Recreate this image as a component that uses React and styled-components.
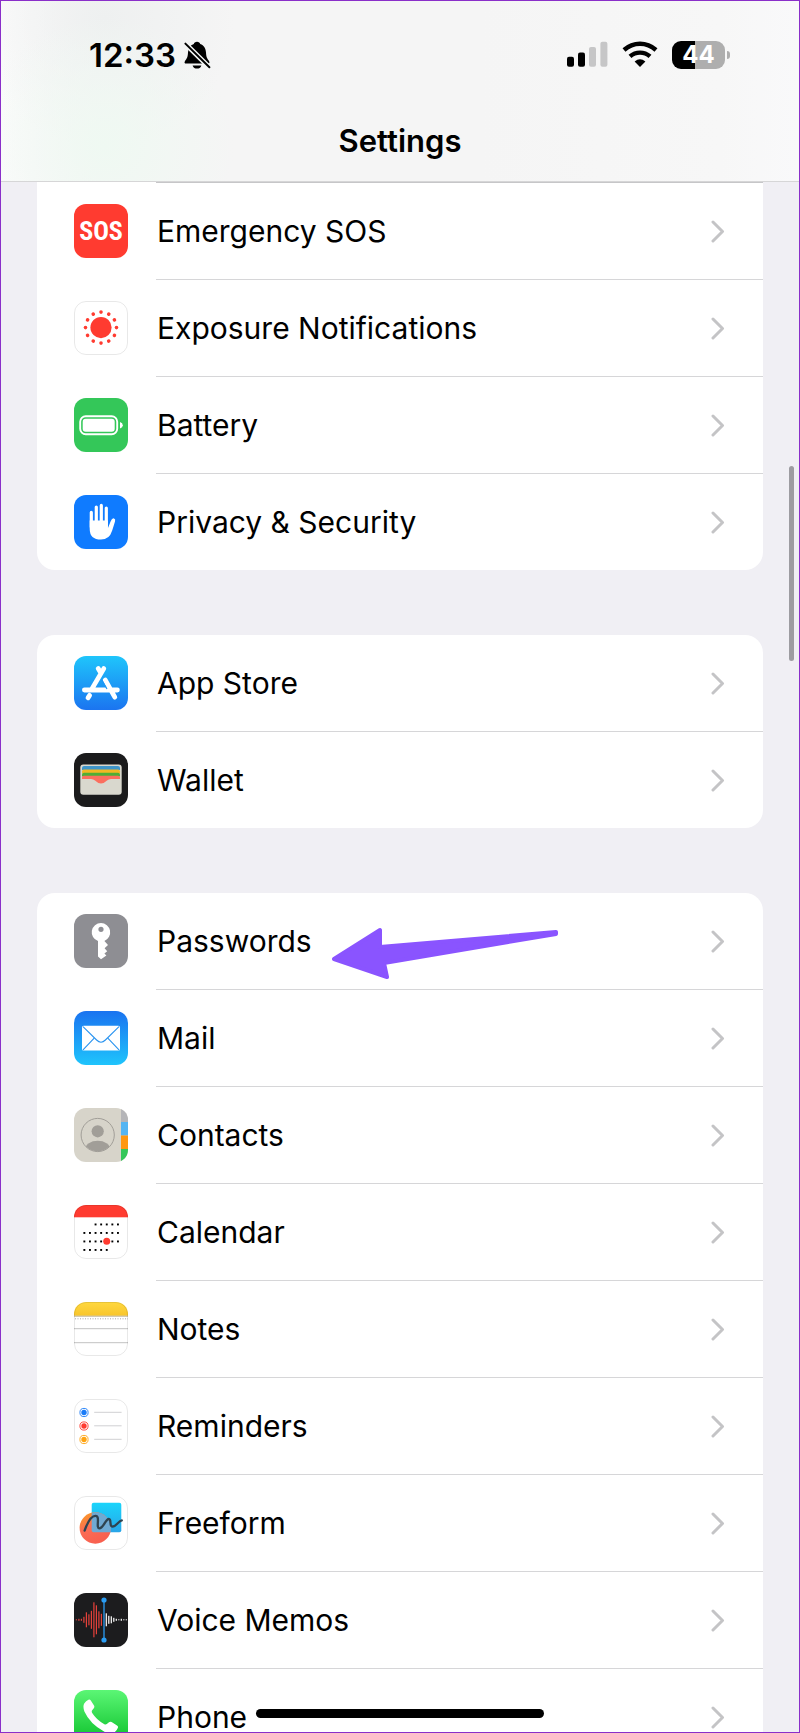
import React from 'react';
import styled, { createGlobalStyle } from 'styled-components';

const range = (n) => Array.from({ length: n }, (_, i) => i);

const SosIcon = () => <SosTile>SOS</SosTile>;

const ExposureIcon = () => (
  <Tile bg='#fff' outlined viewBox='0 0 54 54'>
    <circle cx='27' cy='26.6' r='10.6' fill='#ff3b30' />
    {range(12).map((i) => (
      <circle key={i} cx='27' cy='11.1' r='1.8' fill='#ff3b30' transform={`rotate(${i * 30} 27 26.6)`} />
    ))}
  </Tile>
);

const BatteryIcon = () => (
  <Tile bg='#34c759' viewBox='0 0 54 54'>
    <rect x='6.2' y='18.2' width='37' height='18' rx='5.5' fill='none' stroke='#fff' strokeWidth='1.9' />
    <rect x='8.7' y='20.7' width='32' height='13' rx='3' fill='#fff' />
    <path d='M46 24 Q48.8 25 48.8 27.3 Q48.8 29.6 46 30.6 Z' fill='#fff' />
  </Tile>
);

const HandIcon = () => (
  <Tile bg='#0f7bff' viewBox='0 0 54 54'>
    <path
      d='M17.3 17.4V32M22.3 12V30M27.3 10.4V30M32.3 13V32'
      stroke='#fff'
      strokeWidth='3.2'
      strokeLinecap='round'
      fill='none'
    />
    <path
      d='M15.7 25.5H33.9V33.2Q35.2 30 36.8 26Q38 23 40 23.4Q41.8 24 41 26.4Q39.6 31 38.2 35.4Q35.4 44.6 27 44.6Q15.7 44.6 15.7 34Z'
      fill='#fff'
    />
  </Tile>
);

const AppStoreIcon = () => (
  <Tile bg='linear-gradient(#1fc5fb, #1b74f0)' viewBox='0 0 54 54'>
    <g stroke='#fff' strokeWidth='4.8' strokeLinecap='round'>
      <path d='M29.8 12.6L17.6 33.4M24.2 12.6L27 17.2M31.2 24L40.8 41.2M10.4 34H43.4M15.6 39.4L14 41.8' />
    </g>
    <path d='M27.6 23.6L33 33' stroke='#1e98f7' strokeWidth='1.2' />
  </Tile>
);

const WalletIcon = () => (
  <Tile bg='#1b1b1c' viewBox='0 0 54 54'>
    <rect x='6.3' y='11.5' width='41.4' height='30.2' rx='3' fill='#d9d8ce' />
    <path d='M8 17V15Q8 13 10 13H44Q46 13 46 15V17Z' fill='#3f95c8' />
    <path d='M8 20.5V18.5Q8 16.5 10 16.5H44Q46 16.5 46 18.5V20.5Z' fill='#f2b824' />
    <path d='M8 23.5V21.8Q8 19.8 10 19.8H44Q46 19.8 46 21.8V23.5Z' fill='#4fae35' />
    <path
      d='M8 26V24.6Q8 22.8 10 22.8H44Q46 22.8 46 24.6V26H37Q34.6 26 33 27.6Q30 30.6 27 30.6Q24 30.6 21 27.6Q19.4 26 17 26Z'
      fill='#fb6f5f'
    />
  </Tile>
);

const KeyIcon = () => (
  <Tile bg='#8e8e93' viewBox='0 0 54 54'>
    <path
      fillRule='evenodd'
      fill='#fff'
      d='M27 9A9.3 9.3 0 0 1 30.4 26.9L34 31L30.6 34.2L33.2 37.2L30.4 39.6L32.4 41.4L27 45.2L24 42.6V27.1A9.3 9.3 0 0 1 27 9ZM27 12.7A2.6 2.6 0 1 0 27 17.9A2.6 2.6 0 1 0 27 12.7Z'
    />
  </Tile>
);

const MailIcon = () => (
  <Tile bg='linear-gradient(#1a73f0, #1fc4fc)' viewBox='0 0 54 54'>
    <rect x='8' y='14.8' width='38' height='24.8' rx='1.6' fill='#fff' />
    <g fill='none' stroke='#2a94f0' strokeWidth='1.1'>
      <path d='M9 15.6L22.6 29Q27 33.4 31.4 29L45 15.6' />
      <path d='M9 38.8L20.2 27.2M45 38.8L33.8 27.2' />
    </g>
  </Tile>
);

const ContactsIcon = () => (
  <Tile bg='#d7d4ca' viewBox='0 0 54 54'>
    <rect x='47' width='7' height='14' fill='#b5b5b8' />
    <rect x='47' y='14' width='7' height='13.5' fill='#55b5f2' />
    <rect x='47' y='27.5' width='7' height='13.5' fill='#ff9710' />
    <rect x='47' y='41' width='7' height='13' fill='#34c759' />
    <clipPath id='contact-badge'>
      <circle cx='23.7' cy='27' r='16.4' />
    </clipPath>
    <circle cx='23.7' cy='27' r='16.6' fill='none' stroke='#a19e98' strokeWidth='1' />
    <circle cx='23.7' cy='23.3' r='6.1' fill='#a19e98' />
    <ellipse cx='23.7' cy='41' rx='12.5' ry='8.2' fill='#a19e98' clipPath='url(#contact-badge)' />
  </Tile>
);

// first and last dot of every week in the calendar icon
const WEEKS = [
  [2, 6],
  [0, 6],
  [0, 6],
  [0, 4],
];

const CalendarIcon = () => (
  <Tile bg='#fff' outlined viewBox='0 0 54 54'>
    <rect width='54' height='12.3' fill='#ff3b30' />
    {WEEKS.map(([first, last], week) =>
      range(last - first + 1).map((i) => (
        <rect
          key={`${week}-${i}`}
          x={9.4 + (first + i) * 5.6}
          y={18.5 + week * 8.5}
          width='1.9'
          height='1.9'
          fill='#000'
        />
      ))
    )}
    <circle cx='32.7' cy='36.3' r='3.5' fill='#ff3b30' />
  </Tile>
);

const NotesIcon = () => (
  <Tile bg='#fff' outlined viewBox='0 0 54 54'>
    <defs>
      <linearGradient id='notes-top' x2='0' y2='1'>
        <stop offset='0' stopColor='#ffd83f' />
        <stop offset='1' stopColor='#f8c52c' />
      </linearGradient>
    </defs>
    <rect width='54' height='13.8' fill='url(#notes-top)' />
    <path d='M0 14.2H54' stroke='#b9aa84' strokeWidth='0.9' />
    <path d='M1 16.8H54' stroke='#a8a8a8' strokeWidth='1' strokeDasharray='1 1.5' />
    <path d='M0 26.7H54M0 40.7H54' stroke='#c2c2c2' strokeWidth='1' />
  </Tile>
);

const RemindersIcon = () => (
  <Tile bg='#fff' outlined viewBox='0 0 54 54'>
    {['#1a7cf8', '#ff3b30', '#ffa411'].map((color, i) => (
      <g key={color} transform={`translate(10 ${13.5 + i * 13.5})`}>
        <circle r='4.1' fill='none' stroke={color} strokeWidth='0.9' />
        <circle r='2.7' fill={color} />
        <path d='M10.2 -0.2H37.6' stroke='#d0d0d3' strokeWidth='1' />
      </g>
    ))}
  </Tile>
);

const FreeformIcon = () => (
  <Tile bg='#fff' outlined viewBox='0 0 54 54'>
    <defs>
      <linearGradient id='freeform-ball' x2='0.5' y2='1'>
        <stop offset='0' stopColor='#f9a21a' />
        <stop offset='0.5' stopColor='#fb6d55' />
        <stop offset='1' stopColor='#f8604f' />
      </linearGradient>
      <linearGradient id='freeform-note' x2='0' y2='1'>
        <stop offset='0' stopColor='#1ad4fb' />
        <stop offset='1' stopColor='#28a5e8' />
      </linearGradient>
      <clipPath id='freeform-overlap'>
        <rect x='17.7' y='6.8' width='29.6' height='29.4' rx='2' />
      </clipPath>
    </defs>
    <rect x='17.7' y='6.8' width='29.6' height='29.4' rx='2' fill='url(#freeform-note)' />
    <circle cx='21.3' cy='32' r='15.7' fill='url(#freeform-ball)' />
    <circle cx='21.3' cy='32' r='15.7' fill='#6fa9d3' clipPath='url(#freeform-overlap)' />
    <path
      d='M10.6 34.6C14 25 18 19.6 21.6 19.8C26.6 20 21.4 32.4 25.4 32.4C29.4 32.4 31.8 22.6 34.8 23C38 23.4 34.8 30.6 38.6 30.6C42 30.6 44.6 24.8 47.8 24.4'
      fill='none'
      stroke='#2f4350'
      strokeWidth='2.3'
      strokeLinecap='round'
    />
  </Tile>
);

const WAVE = [1, 2, 2, 6, 15, 11, 18, 35, 29, 17, 12];
const WAVE_TAIL = [13, 8, 7, 4, 2, 1, 2, 1, 1];

const VoiceMemosIcon = () => (
  <Tile bg='#1c1c1e' viewBox='0 0 54 54'>
    {WAVE.map((h, i) => (
      <rect key={i} x={1.8 + i * 2.5} y={26.8 - h / 2} width='1.2' height={h} fill='#e5413a' />
    ))}
    {WAVE_TAIL.map((h, i) => (
      <rect key={i} x={31.7 + i * 2.5} y={26.8 - h / 2} width='1.2' height={h} fill='#fff' />
    ))}
    <path d='M30 7V47' stroke='#2a9df4' strokeWidth='1.3' />
    <circle cx='30' cy='7' r='2.6' fill='#2a9df4' />
    <circle cx='30' cy='47' r='2.6' fill='#2a9df4' />
  </Tile>
);

const PhoneIcon = () => (
  <Tile bg='linear-gradient(#5bf675, #0bbf29)' viewBox='0 0 54 54'>
    <path
      d='M10.2 13.6Q12 11 14.4 9.8Q15.8 9.2 16.8 10.6L20 15.4Q20.8 16.8 19.8 18.2L18 20.6Q17.4 21.6 18.2 23Q22.6 30 30.4 34.2Q31.8 34.8 32.8 34L35 32.2Q36.2 31.2 37.6 32L43 35.4Q44.6 36.4 43.8 38Q42.6 41 39.8 42.8Q36 44.8 30 41.6Q16 34 10.4 21.6Q8.6 16.6 10.2 13.6Z'
      fill='#fff'
    />
  </Tile>
);

const Chevron = () => (
  <ChevronSvg viewBox='0 0 14 26' aria-hidden='true'>
    <path d='M2 4L11.5 13.5L2 23' />
  </ChevronSvg>
);

const Arrow = () => (
  <ArrowSvg viewBox='0 0 232 58' aria-hidden='true'>
    <path d='M4 34L50 5V22L226 7V9L54 38L57 52Z' />
  </ArrowSvg>
);

const GROUPS = [
  [
    { name: 'Emergency SOS', Icon: SosIcon },
    { name: 'Exposure Notifications', Icon: ExposureIcon },
    { name: 'Battery', Icon: BatteryIcon },
    { name: 'Privacy & Security', Icon: HandIcon },
  ],
  [
    { name: 'App Store', Icon: AppStoreIcon },
    { name: 'Wallet', Icon: WalletIcon },
  ],
  [
    { name: 'Passwords', Icon: KeyIcon, marked: true },
    { name: 'Mail', Icon: MailIcon },
    { name: 'Contacts', Icon: ContactsIcon },
    { name: 'Calendar', Icon: CalendarIcon },
    { name: 'Notes', Icon: NotesIcon },
    { name: 'Reminders', Icon: RemindersIcon },
    { name: 'Freeform', Icon: FreeformIcon },
    { name: 'Voice Memos', Icon: VoiceMemosIcon },
    { name: 'Phone', Icon: PhoneIcon },
  ],
];

const StatusBar = () => (
  <StatusRow>
    <StatusSide tight>
      <Time>12:33</Time>
      <svg width='28' height='28' viewBox='0 0 28 28' aria-label='Silent mode'>
        <path d='M14 0.8C15.8 0.8 16.8 1.8 17.2 3C21 4.4 22.8 7.6 23 11.6C23.2 16 24 17.6 26 20Q27.4 22.6 24.6 22.6H3.4Q0.6 22.6 2 20C4 17.6 4.8 16 5 11.6C5.2 7.6 7 4.4 10.8 3C11.2 1.8 12.2 0.8 14 0.8Z' />
        <path d='M9.6 24.4H18.4Q17.2 27.6 14 27.6Q10.8 27.6 9.6 24.4Z' />
        <path d='M2.4 2.8L26.6 26.6' stroke='#f3f5f4' strokeWidth='5' />
        <path d='M2.4 2.6L26.4 26.2' stroke='#000' strokeWidth='2' strokeLinecap='round' />
      </svg>
    </StatusSide>
    <StatusSide>
      <svg width='42' height='28' viewBox='0 0 42 28' aria-label='Signal'>
        <rect x='1' y='15.8' width='7' height='10' rx='2' />
        <rect x='12' y='11.6' width='7' height='14.2' rx='2' />
        <rect x='23' y='6' width='7' height='19.8' rx='2' fill='#c6c6c7' />
        <rect x='34.4' y='0.8' width='7' height='25' rx='2' fill='#c6c6c7' />
      </svg>
      <WifiSvg viewBox='0 0 36 28' aria-label='Wi-Fi'>
        <path d='M2 9Q9 2.8 18 2.8Q27 2.8 34 9' />
        <path d='M8 15.4Q12.4 11.6 18 11.6Q23.6 11.6 28 15.4' />
        <path d='M12.6 20.4Q18 16.2 23.4 20.4L18 26Z' stroke='none' fill='#000' />
      </WifiSvg>
      <Level>44</Level>
    </StatusSide>
  </StatusRow>
);

const App = () => {
  return (
    <Screen>
      <GlobalStyle />
      <Header>
        <StatusBar />
        <Title>Settings</Title>
      </Header>
      <Content>
        {GROUPS.map((items, index) => (
          <Group key={index} continued={index === 0}>
            {items.map(({ name, Icon, marked }) => (
              <Item key={name}>
                <RowLink href='#'>
                  <Icon />
                  <Label>{name}</Label>
                  <Chevron />
                </RowLink>
                {marked ? <Arrow /> : null}
              </Item>
            ))}
          </Group>
        ))}
      </Content>
      <ScrollThumb />
      <HomeIndicator />
    </Screen>
  );
};

export default App;

const GlobalStyle = createGlobalStyle`
  * {
    box-sizing: border-box;
  }
  body {
    margin: 0;
    font-family: Inter, 'Liberation Sans', sans-serif;
    color: #000;
  }
`;

const Screen = styled.div`
  position: relative;
  display: flex;
  flex-direction: column;
  height: 100vh;
  overflow: hidden;
  border: 1px solid #8a2fc9;
  background: #f0eff4;
`;

const Header = styled.header`
  flex: none;
  padding: 27px 68px 18px 88px;
  border-bottom: 1px solid #d6d6d7;
  background: radial-gradient(circle at 13% 80%, #eff9f2 0, rgba(239, 249, 242, 0) 130px),
    radial-gradient(circle at 13% 10%, #eef0f0 0, rgba(238, 240, 240, 0) 130px),
    linear-gradient(90deg, #fbfbfb, #f5f5f5 12%, #f5f5f5 60%, #f7f7f7 90%, #f9f9fa);
`;

const StatusRow = styled.div`
  display: flex;
  justify-content: space-between;
  align-items: center;
  height: 53px;
`;

const StatusSide = styled.div.withConfig({ shouldForwardProp: (prop) => prop !== 'tight' })`
  display: flex;
  align-items: center;
  gap: ${(props) => (props.tight ? '7px' : '14px')};
`;

const Time = styled.span`
  font-size: 33px;
  font-weight: 600;
  line-height: 40px;
`;

const WifiSvg = styled.svg`
  width: 36px;
  height: 28px;
  fill: none;
  stroke: #000;
  stroke-width: 4.4;
`;

const Level = styled.span`
  position: relative;
  width: 53px;
  margin-right: 6px;
  border-radius: 9px;
  background: linear-gradient(90deg, #000 43%, #aeaeae 43%);
  color: #fff;
  font-size: 24px;
  font-weight: 700;
  line-height: 28px;
  text-align: center;
  &::after {
    content: '';
    position: absolute;
    left: 55px;
    top: 10px;
    width: 3px;
    height: 8px;
    border-radius: 0 4px 4px 0;
    background: #aeaeae;
  }
`;

const Title = styled.h1`
  margin: 38px 0 0 -20px;
  font-size: 31px;
  font-weight: 600;
  line-height: 44px;
  text-align: center;
`;

const Content = styled.main`
  display: flex;
  flex-direction: column;
  gap: 65px;
  padding: 0 36px;
`;

const Item = styled.li`
  position: relative;
  & + &::before {
    content: '';
    display: block;
    height: 1px;
    margin-left: 119px;
    background: #d6d6d8;
  }
`;

const Group = styled.ul.withConfig({ shouldForwardProp: (prop) => prop !== 'continued' })`
  margin: 0;
  padding: 0;
  list-style: none;
  background: #fff;
  border-radius: ${(props) => (props.continued ? '0 0 18px 18px' : '18px')};
  ${(props) =>
    props.continued &&
    `&::before {
      content: '';
      display: block;
      height: 1px;
      margin-left: 119px;
      background: #c6c6c8;
    }`}
`;

const RowLink = styled.a`
  display: flex;
  align-items: center;
  height: 96px;
  padding: 0 38px 0 37px;
  color: inherit;
  text-decoration: none;
`;

const Label = styled.span`
  flex: 1;
  padding-left: 29px;
  font-size: 30px;
  line-height: 30px;
  white-space: nowrap;
`;

const Tile = styled.svg.withConfig({
  shouldForwardProp: (prop) => !['bg', 'outlined'].includes(prop),
})`
  flex: none;
  width: 54px;
  height: 54px;
  border-radius: 12px;
  background: ${(props) => props.bg};
  outline: ${(props) => (props.outlined ? '1px solid rgba(0, 0, 0, 0.09)' : 'none')};
  outline-offset: -1px;
  overflow: hidden;
`;

const SosTile = styled.span`
  flex: none;
  width: 54px;
  height: 54px;
  border-radius: 12px;
  background: #ff3b30;
  color: #fff;
  font-family: 'Liberation Sans Narrow', 'Roboto Condensed', 'Open Sans Condensed', sans-serif;
  font-size: 26px;
  font-weight: 700;
  line-height: 54px;
  text-align: center;
`;

const ChevronSvg = styled.svg`
  flex: none;
  width: 14px;
  height: 26px;
  fill: none;
  stroke: #c4c4c6;
  stroke-width: 3;
  stroke-linecap: round;
  stroke-linejoin: round;
`;

const ArrowSvg = styled.svg`
  position: absolute;
  left: 293px;
  top: 32px;
  width: 232px;
  height: 58px;
  fill: #8a54ff;
  stroke: #8a54ff;
  stroke-width: 4;
  stroke-linejoin: round;
  pointer-events: none;
`;

const ScrollThumb = styled.div`
  position: absolute;
  top: 465px;
  right: 5px;
  width: 5px;
  height: 195px;
  border-radius: 3px;
  background: #9d9ca1;
`;

const HomeIndicator = styled.div`
  position: absolute;
  bottom: 14px;
  left: 32%;
  right: 32%;
  height: 9px;
  border-radius: 5px;
  background: #000;
`;
